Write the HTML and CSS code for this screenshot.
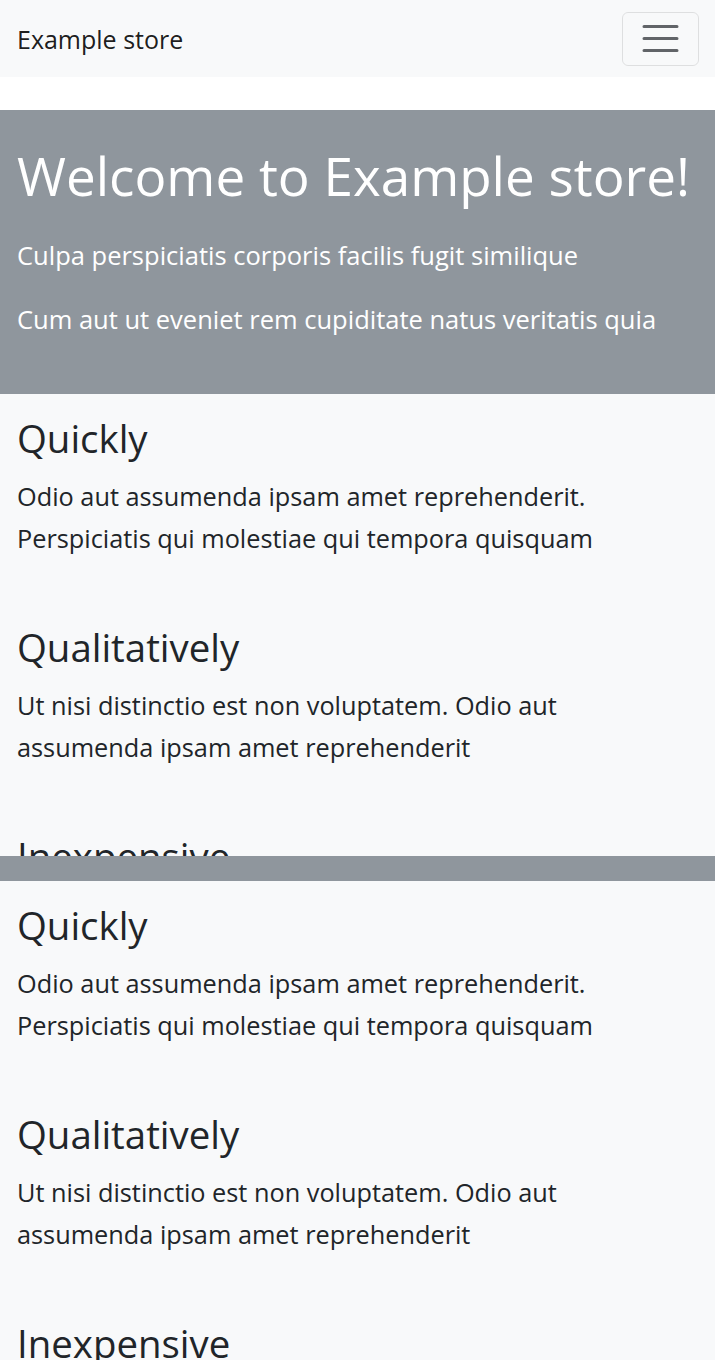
FILE: index.html
```html
<!DOCTYPE html>
<html lang="en">
<head>
<meta charset="utf-8">
<title>Example store</title>
<link rel="stylesheet" href="styles.css">
</head>
<body>
<nav class="navbar">
  <a class="brand" href="#">Example store</a>
  <button class="toggler" type="button" aria-label="Toggle navigation">
    <svg class="toggler-icon" viewBox="0 0 30 30" width="45" height="45" aria-hidden="true">
      <path d="M4 7h22M4 15h22M4 23h22" stroke="rgba(33,37,41,0.7)" stroke-width="2" stroke-linecap="round" fill="none"/>
    </svg>
  </button>
</nav>

<header class="hero">
  <h1 class="hero-title">Welcome to Example store!</h1>
  <p class="hero-text">Culpa perspiciatis corporis facilis fugit similique</p>
  <p class="hero-text">Cum aut ut eveniet rem cupiditate natus veritatis quia</p>
</header>

<section class="features features-clipped">
  <div class="feature">
    <h2 class="feature-title">Quickly</h2>
    <p class="feature-text">Odio aut assumenda ipsam amet reprehenderit. Perspiciatis qui molestiae qui tempora quisquam</p>
  </div>
  <div class="feature">
    <h2 class="feature-title">Qualitatively</h2>
    <p class="feature-text">Ut nisi distinctio est non voluptatem. Odio aut assumenda ipsam amet reprehenderit</p>
  </div>
  <div class="feature">
    <h2 class="feature-title">Inexpensive</h2>
  </div>
</section>

<div class="band"></div>

<section class="features">
  <div class="feature">
    <h2 class="feature-title">Quickly</h2>
    <p class="feature-text">Odio aut assumenda ipsam amet reprehenderit. Perspiciatis qui molestiae qui tempora quisquam</p>
  </div>
  <div class="feature">
    <h2 class="feature-title">Qualitatively</h2>
    <p class="feature-text">Ut nisi distinctio est non voluptatem. Odio aut assumenda ipsam amet reprehenderit</p>
  </div>
  <div class="feature">
    <h2 class="feature-title">Inexpensive</h2>
  </div>
</section>
</body>
</html>
```

FILE: styles.css
```css
* {
  box-sizing: border-box;
}

html, body {
  margin: 0;
  padding: 0;
}

body {
  font-family: "Open Sans", "Noto Sans", sans-serif;
  color: #212529;
  background: #ffffff;
}

.navbar {
  height: 77px;
  background: #f8f9fa;
  display: flex;
  align-items: center;
  justify-content: space-between;
  padding: 0 16px 0 17px;
}

.brand {
  font-size: 25px;
  line-height: 1.2;
  color: rgba(0, 0, 0, 0.9);
  text-decoration: none;
}

.toggler {
  width: 77px;
  height: 54px;
  padding: 0;
  display: flex;
  align-items: center;
  justify-content: center;
  background: transparent;
  border: 1px solid rgba(0, 0, 0, 0.1);
  border-radius: 6px;
}

.toggler-icon {
  display: block;
}

.hero {
  margin-top: 33px;
  background: #8f969d;
  color: #ffffff;
  padding: 34px 17px 56px;
}

.hero-title {
  margin: 0 0 28px;
  font-size: 53px;
  font-weight: 400;
  line-height: 1.2;
  white-space: nowrap;
}

.hero-text {
  margin: 0 0 26px;
  font-size: 25.5px;
  line-height: 1.5;
}

.hero-text:last-child {
  margin-bottom: 0;
}

.features {
  background: #f8f9fa;
  padding: 21px 17px 0;
}

.features-clipped {
  height: 462px;
  overflow: hidden;
}

.feature {
  margin-bottom: 65px;
}

.feature-title {
  margin: 0 0 14px;
  font-size: 38.4px;
  font-weight: 400;
  line-height: 1.2;
}

.feature-text {
  margin: 0;
  max-width: 640px;
  font-size: 25.3px;
  line-height: 42px;
}

.band {
  height: 25px;
  background: #8f969d;
}
```
